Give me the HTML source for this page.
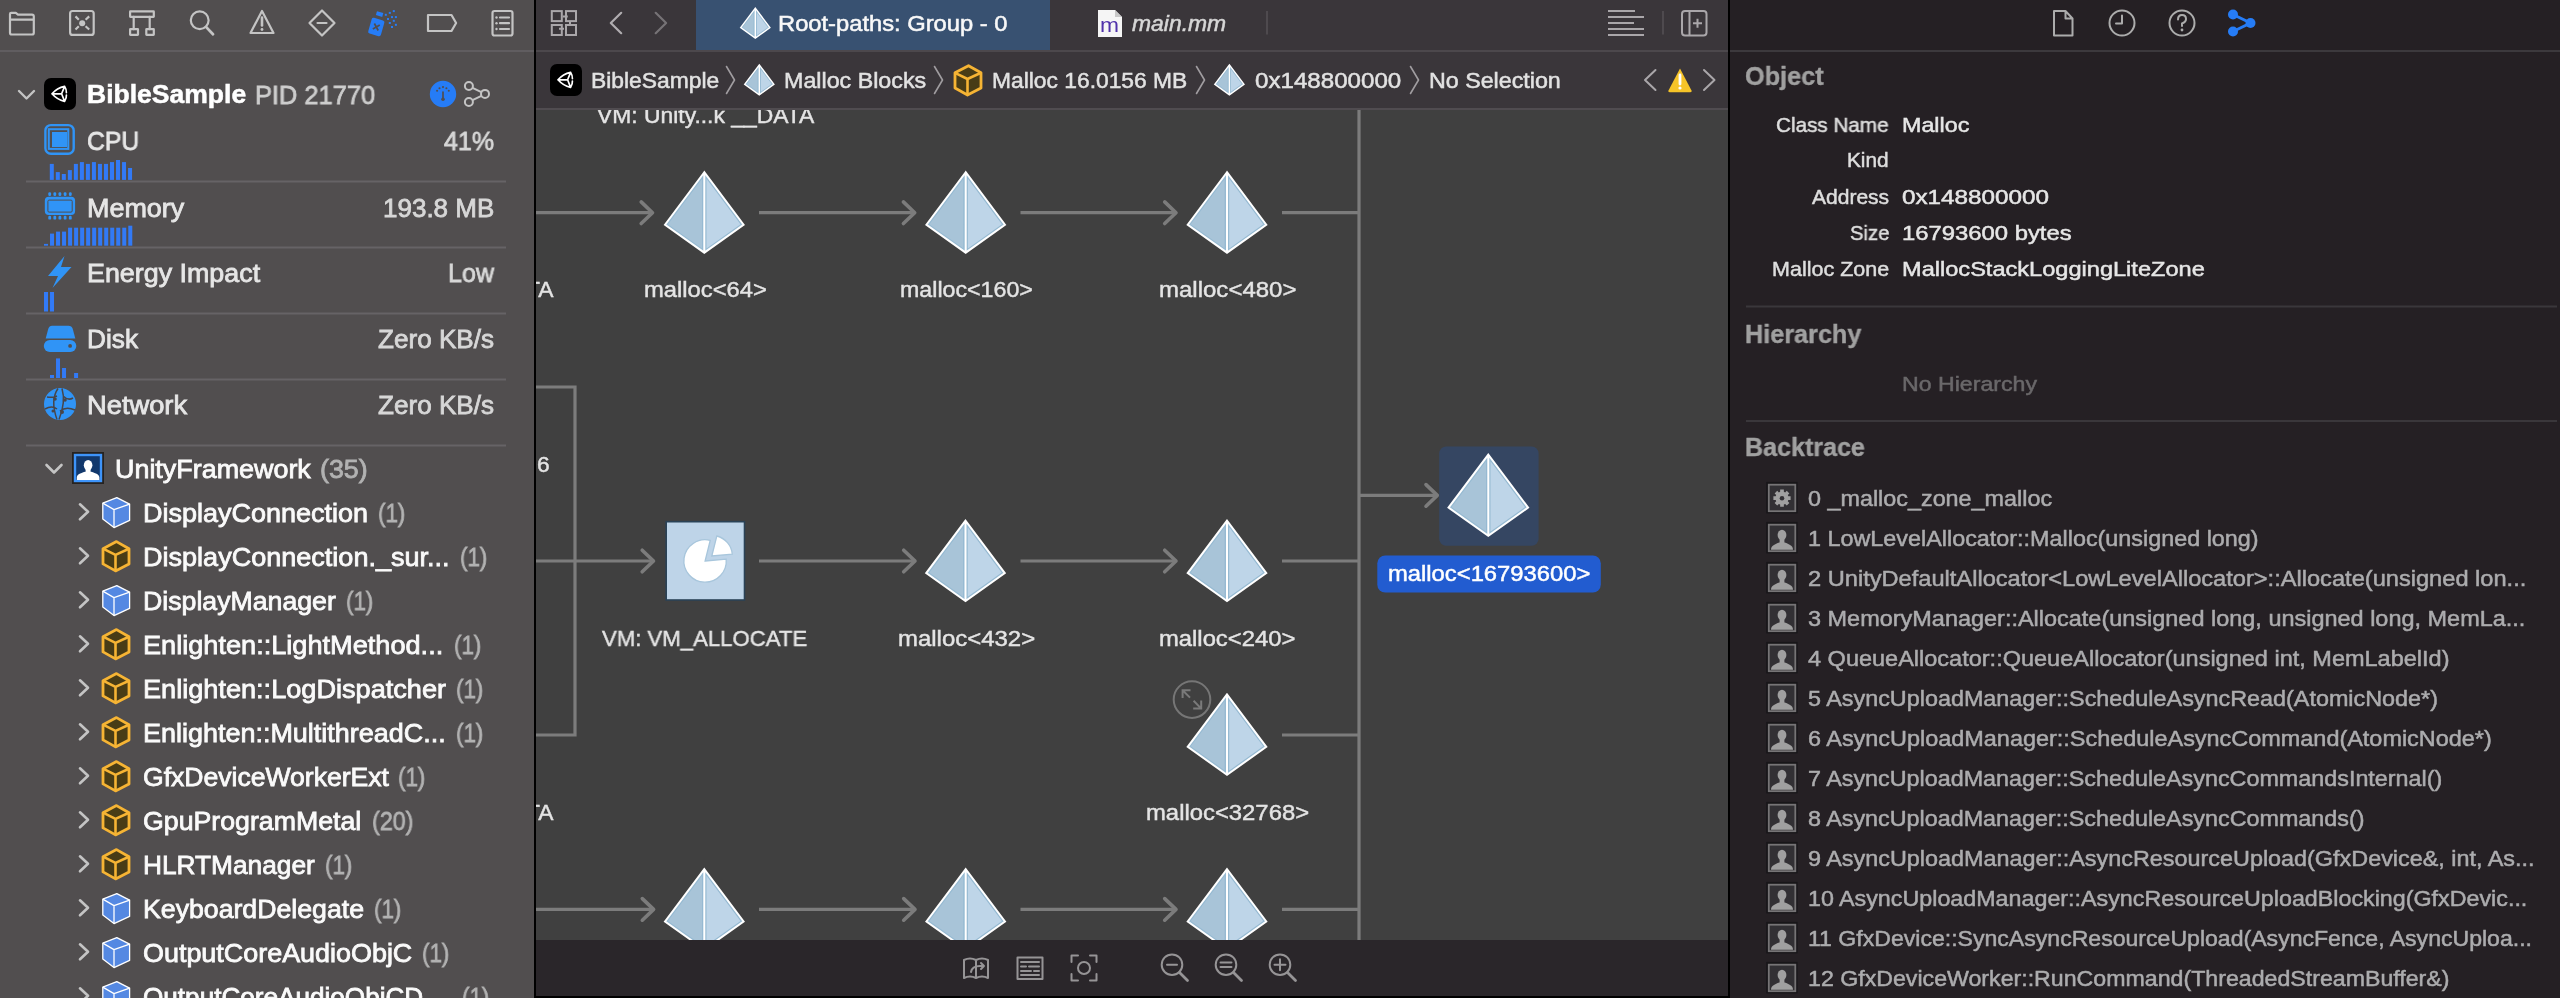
<!DOCTYPE html><html><head><meta charset="utf-8"><style>html,body{margin:0;padding:0;width:2560px;height:998px;overflow:hidden;background:#252226}.t{position:absolute;white-space:pre;font-family:"Liberation Sans",sans-serif;line-height:normal;transform-origin:0 0;will-change:transform}#gclip{position:absolute;left:536px;top:110px;width:1192px;height:830px;overflow:hidden}</style></head><body>
<svg style="position:absolute;left:0;top:0" width="2560" height="998" viewBox="0 0 2560 998"><rect x="0" y="0" width="534" height="998" fill="rgb(81,78,79)"/><rect x="534" y="0" width="2" height="998" fill="#000"/><rect x="536" y="0" width="1192" height="108" fill="rgb(58,54,58)"/><rect x="696" y="0" width="354" height="50" fill="rgb(56,81,113)"/><rect x="536" y="50" width="1192" height="2" fill="rgb(76,72,76)"/><rect x="536" y="108" width="1192" height="2" fill="rgb(80,76,80)"/><rect x="536" y="110" width="1192" height="830" fill="rgb(64,64,64)"/><rect x="536" y="940" width="1192" height="56" fill="rgb(42,38,42)"/><rect x="536" y="996" width="1192" height="2" fill="#000"/><rect x="1728" y="0" width="2" height="998" fill="#000"/><rect x="1730" y="0" width="830" height="998" fill="rgb(37,32,36)"/><rect x="1730" y="50" width="830" height="2" fill="rgb(60,57,61)"/><rect x="0" y="50" width="534" height="2" fill="rgb(96,93,96)"/><g fill="none" stroke="rgb(196,196,196)" stroke-width="2.2" stroke-linejoin="round" stroke-linecap="round"><path d="M10 14 q0-1.2 1.2-1.2 h4.6 l2.2 1.8 h14 q1.8 0 1.8 1.8 v16.3 q0 1.8-1.8 1.8 h-20.2 q-1.8 0-1.8-1.8 z M10 19.7 h23.8"/><rect x="70.1" y="11" width="23.6" height="23.9" rx="2.5"/><path d="M75.5 16.4 l3.3 3.3 M89.2 16.4 l-3.6 3.3 M75.5 29.5 l3.3-3.2 M89.2 29.5 l-3.6-3.2" stroke-linecap="butt"/></g><circle cx="82.2" cy="23.2" r="3" fill="rgb(196,196,196)"/><g fill="none" stroke="rgb(196,196,196)" stroke-width="2.2" stroke-linejoin="round" stroke-linecap="round"><rect x="130.1" y="11.4" width="23.7" height="5.4" rx="0.3"/><path d="M133.7 16.8 v12.4 M149.7 16.8 v12.4"/><rect x="130.1" y="29.2" width="7.9" height="5.7" rx="0.3"/><rect x="146.3" y="29.2" width="7.5" height="5.7" rx="0.3"/><circle cx="199.7" cy="20.2" r="8.9"/><path d="M206 26.9 l7 7.3" stroke-width="2.8"/><path d="M262 11 l11.5 22 h-23 z"/><path d="M322 10.5 l12.5 12.5 l-12.5 12.5 l-12.5-12.5 z M317.5 23 h9"/><path d="M428 15 h23.5 l4.6 8 l-4.6 8 h-23.5 z"/><rect x="492.5" y="11" width="20" height="24.5" rx="2"/><path d="M500 17.5 h9 M500 23.2 h9 M500 29 h9"/></g><circle cx="496.5" cy="17.5" r="1.2" fill="rgb(196,196,196)"/><circle cx="496.5" cy="23.2" r="1.2" fill="rgb(196,196,196)"/><circle cx="496.5" cy="29" r="1.2" fill="rgb(196,196,196)"/><path d="M262 17.5 v8" stroke="rgb(196,196,196)" stroke-width="2.6" stroke-linecap="round"/><circle cx="262" cy="29.5" r="1.4" fill="rgb(196,196,196)"/><g transform="translate(376.3,27) rotate(16)"><rect x="-6.6" y="-8.2" width="13.2" height="16.4" rx="2" fill="rgb(38,124,246)"/><path d="M-2.8 -2.8 l5.6 5.6 M2.8 -2.8 l-5.6 5.6" stroke="rgb(81,78,79)" stroke-width="1.7"/></g><g transform="translate(379.6,14.1) rotate(16)"><rect x="-3.3" y="-2" width="6.6" height="4" fill="rgb(38,124,246)"/></g><rect x="392.8" y="10.1" width="2" height="2" fill="rgb(38,124,246)"/><rect x="388.8" y="11.9" width="2" height="2" fill="rgb(38,124,246)"/><rect x="384.8" y="13.8" width="2" height="2" fill="rgb(38,124,246)"/><rect x="391" y="16.1" width="2" height="2" fill="rgb(38,124,246)"/><rect x="394.9" y="16.1" width="2" height="2" fill="rgb(38,124,246)"/><rect x="387" y="18" width="2" height="2" fill="rgb(38,124,246)"/><rect x="392.8" y="19.8" width="2" height="2" fill="rgb(38,124,246)"/><rect x="388.8" y="22" width="2" height="2" fill="rgb(38,124,246)"/><rect x="394.9" y="23.8" width="2" height="2" fill="rgb(38,124,246)"/><rect x="391" y="26" width="2" height="2" fill="rgb(38,124,246)"/><path d="M19 91 l7.5 7.5 l7.5-7.5" fill="none" stroke="rgb(196,196,196)" stroke-width="2.4" stroke-linecap="round" stroke-linejoin="round"/><g transform="translate(44,78) scale(1.0)"><rect x="0" y="0" width="32" height="32" rx="7" fill="#000"/><path d="M8 15.8 Q13 10 20.6 8.4 Q22.6 11.5 22.4 14.6 M22.4 17 Q22.6 20.2 20.6 23.4 Q13 21.6 8 15.8 M8 15.8 H17.6 L20.6 8.4 M17.6 15.8 L20.6 23.4" fill="none" stroke="#fff" stroke-width="1.7" stroke-linejoin="round" stroke-linecap="round"/></g><circle cx="443" cy="94" r="13.2" fill="rgb(38,124,246)"/><path d="M443 92 v7" stroke="rgb(81,78,79)" stroke-width="1.7" stroke-linecap="round"/><circle cx="443" cy="99.3" r="1.8" fill="rgb(81,78,79)"/><circle cx="437.1" cy="90.8" r="1.05" fill="rgb(81,78,79)"/><circle cx="439.5" cy="88.3" r="1.05" fill="rgb(81,78,79)"/><circle cx="443" cy="87.1" r="1.05" fill="rgb(81,78,79)"/><circle cx="446.4" cy="88.3" r="1.05" fill="rgb(81,78,79)"/><circle cx="448.8" cy="90.8" r="1.05" fill="rgb(81,78,79)"/><g fill="none" stroke="rgb(196,196,196)" stroke-width="2"><circle cx="468.9" cy="86" r="4"/><circle cx="485" cy="93.9" r="4"/><circle cx="468.9" cy="102" r="4"/><path d="M472.5 87.8 l8.9 4.4 M472.5 100.2 l8.9 -4.4"/></g><rect x="26" y="180.5" width="480" height="2" fill="rgb(102,99,102)"/><rect x="26" y="246.5" width="480" height="2" fill="rgb(102,99,102)"/><rect x="26" y="312.5" width="480" height="2" fill="rgb(102,99,102)"/><rect x="26" y="378.5" width="480" height="2" fill="rgb(102,99,102)"/><rect x="26" y="444.5" width="480" height="2" fill="rgb(102,99,102)"/><rect x="45.4" y="125.1" width="28.3" height="28.6" rx="5.5" fill="none" stroke="rgb(48,148,246)" stroke-width="2.4"/><rect x="48.8" y="129.2" width="19.5" height="19.7" fill="none" stroke="rgb(48,148,246)" stroke-width="2"/><rect x="52" y="132" width="15" height="15" fill="rgb(48,148,246)"/><rect x="45.8" y="197.8" width="28.3" height="16.2" rx="3" fill="rgb(48,148,246)" stroke="rgb(48,148,246)" stroke-width="2"/><rect x="47.9" y="200.1" width="24.3" height="12" rx="1.2" fill="rgb(48,148,246)" stroke="rgb(81,78,79)" stroke-width="1"/><rect x="48.3" y="192.2" width="2.8" height="3.8" rx="1.2" fill="rgb(48,148,246)"/><rect x="48.3" y="215.8" width="2.8" height="3.8" rx="1.2" fill="rgb(48,148,246)"/><rect x="53.4" y="192.2" width="2.8" height="3.8" rx="1.2" fill="rgb(48,148,246)"/><rect x="53.4" y="215.8" width="2.8" height="3.8" rx="1.2" fill="rgb(48,148,246)"/><rect x="58.5" y="192.2" width="2.8" height="3.8" rx="1.2" fill="rgb(48,148,246)"/><rect x="58.5" y="215.8" width="2.8" height="3.8" rx="1.2" fill="rgb(48,148,246)"/><rect x="63.7" y="192.2" width="2.8" height="3.8" rx="1.2" fill="rgb(48,148,246)"/><rect x="63.7" y="215.8" width="2.8" height="3.8" rx="1.2" fill="rgb(48,148,246)"/><rect x="68.9" y="192.2" width="2.8" height="3.8" rx="1.2" fill="rgb(48,148,246)"/><rect x="68.9" y="215.8" width="2.8" height="3.8" rx="1.2" fill="rgb(48,148,246)"/><path d="M64.5 256 L48 276 H58 L52.5 288 L71.5 267 H61 Z" fill="rgb(48,148,246)"/><path d="M52 325.8 h16.5 q3.2 0 4.2 3 l2.6 9.6 h-29.6 l2.6-9.6 q1-3 3.7-3 z" fill="rgb(48,148,246)"/><rect x="43.8" y="340" width="32.5" height="12" rx="6" fill="rgb(48,148,246)"/><circle cx="70.1" cy="345.9" r="1.9" fill="rgb(81,78,79)"/><circle cx="60" cy="404" r="16" fill="rgb(48,148,246)"/><g fill="none" stroke="rgb(72,70,74)" stroke-width="1.5"><path d="M58 388.5 Q50 400 57 419.5 M62 388.5 Q66 402 59 419.5 M47 397 Q53 398 57 396 M63 396 Q68 401 73 398 M45 409 Q52 405 57 409 M60 411 Q66 406 75 410"/></g><g fill="rgb(72,70,74)"><circle cx="55" cy="399" r="1.8"/><circle cx="65" cy="400" r="1.8"/><circle cx="62" cy="412" r="2"/><circle cx="53" cy="411" r="1.5"/></g><rect x="49.80" y="163.90" width="4" height="16.00" fill="rgb(50,122,246)"/><rect x="55.82" y="172.10" width="4" height="7.80" fill="rgb(50,122,246)"/><rect x="61.84" y="174.00" width="4" height="5.90" fill="rgb(50,122,246)"/><rect x="67.86" y="170.10" width="4" height="9.80" fill="rgb(50,122,246)"/><rect x="73.88" y="163.90" width="4" height="16.00" fill="rgb(50,122,246)"/><rect x="79.90" y="162.10" width="4" height="17.80" fill="rgb(50,122,246)"/><rect x="85.92" y="163.90" width="4" height="16.00" fill="rgb(50,122,246)"/><rect x="91.94" y="162.10" width="4" height="17.80" fill="rgb(50,122,246)"/><rect x="97.96" y="163.90" width="4" height="16.00" fill="rgb(50,122,246)"/><rect x="103.98" y="163.90" width="4" height="16.00" fill="rgb(50,122,246)"/><rect x="110.00" y="162.10" width="4" height="17.80" fill="rgb(50,122,246)"/><rect x="116.02" y="160.00" width="4" height="19.90" fill="rgb(50,122,246)"/><rect x="122.04" y="162.10" width="4" height="17.80" fill="rgb(50,122,246)"/><rect x="128.06" y="168.00" width="4" height="11.90" fill="rgb(50,122,246)"/><rect x="44.00" y="243.90" width="4" height="1.80" fill="rgb(50,122,246)"/><rect x="50.02" y="233.60" width="4" height="12.10" fill="rgb(50,122,246)"/><rect x="56.04" y="231.60" width="4" height="14.10" fill="rgb(50,122,246)"/><rect x="62.06" y="231.60" width="4" height="14.10" fill="rgb(50,122,246)"/><rect x="68.08" y="227.70" width="4" height="18.00" fill="rgb(50,122,246)"/><rect x="74.10" y="227.70" width="4" height="18.00" fill="rgb(50,122,246)"/><rect x="80.12" y="227.70" width="4" height="18.00" fill="rgb(50,122,246)"/><rect x="86.14" y="227.70" width="4" height="18.00" fill="rgb(50,122,246)"/><rect x="92.16" y="227.70" width="4" height="18.00" fill="rgb(50,122,246)"/><rect x="98.18" y="227.70" width="4" height="18.00" fill="rgb(50,122,246)"/><rect x="104.20" y="227.70" width="4" height="18.00" fill="rgb(50,122,246)"/><rect x="110.22" y="227.70" width="4" height="18.00" fill="rgb(50,122,246)"/><rect x="116.24" y="227.70" width="4" height="18.00" fill="rgb(50,122,246)"/><rect x="122.26" y="227.70" width="4" height="18.00" fill="rgb(50,122,246)"/><rect x="128.28" y="225.70" width="4" height="20.00" fill="rgb(50,122,246)"/><rect x="44.00" y="292.00" width="4" height="19.50" fill="rgb(50,122,246)"/><rect x="50.02" y="292.00" width="4" height="19.50" fill="rgb(50,122,246)"/><rect x="50.00" y="375.00" width="4" height="3.00" fill="rgb(50,122,246)"/><rect x="56.02" y="358.40" width="4" height="19.60" fill="rgb(50,122,246)"/><rect x="62.04" y="368.00" width="4" height="10.00" fill="rgb(50,122,246)"/><rect x="74.08" y="373.00" width="4" height="5.00" fill="rgb(50,122,246)"/><path d="M46.5 465 l7.5 7.5 l7.5-7.5" fill="none" stroke="rgb(196,196,196)" stroke-width="2.6" stroke-linecap="round" stroke-linejoin="round"/><rect x="72" y="452" width="32" height="32" fill="rgb(38,34,32)"/><rect x="75" y="455" width="26" height="26" fill="rgb(18,56,108)" stroke="rgb(62,148,250)" stroke-width="2.4"/><g fill="#fff"><ellipse cx="88.1" cy="465.3" rx="4.3" ry="5.3"/><rect x="85.6" y="468" width="5" height="4.5"/><path d="M76.8 480.1 V477.5 C77 474.5 80 473.5 85 471.8 H91.2 C96.2 473.5 99.2 474.5 99.4 477.5 V480.1 Z"/></g><path d="M80 504.29999999999995 l8 7.5 l-8 7.5" fill="none" stroke="rgb(196,196,196)" stroke-width="2.6" stroke-linecap="round" stroke-linejoin="round"/><g transform="translate(102.3,497.09999999999997)"><path d="M0.5 6 L14.5 0.5 L27.3 7 L27.3 23.3 L11.7 30.5 L0.5 22 Z" fill="rgb(84,136,226)" stroke="#fff" stroke-width="1.3" stroke-linejoin="round"/><path d="M0.5 6 L11.7 12.5 L27.3 7 M11.7 12.5 V30.5" fill="none" stroke="#fff" stroke-width="1.3" stroke-linejoin="round"/></g><path d="M80 548.3 l8 7.5 l-8 7.5" fill="none" stroke="rgb(196,196,196)" stroke-width="2.6" stroke-linecap="round" stroke-linejoin="round"/><g transform="translate(102,540.4)"><path d="M14.5 1.2 L27 8.3 L27 23.5 L13.5 30.5 L1 23.5 L1 8.3 Z" fill="rgb(72,60,22)" stroke="rgb(246,180,52)" stroke-width="2.8" stroke-linejoin="round"/><path d="M1 8.3 L13.5 14.5 L27 8.3 M13.5 14.5 V30.5" fill="none" stroke="rgb(246,180,52)" stroke-width="2.6" stroke-linejoin="round"/></g><path d="M80 592.3 l8 7.5 l-8 7.5" fill="none" stroke="rgb(196,196,196)" stroke-width="2.6" stroke-linecap="round" stroke-linejoin="round"/><g transform="translate(102.3,585.0999999999999)"><path d="M0.5 6 L14.5 0.5 L27.3 7 L27.3 23.3 L11.7 30.5 L0.5 22 Z" fill="rgb(84,136,226)" stroke="#fff" stroke-width="1.3" stroke-linejoin="round"/><path d="M0.5 6 L11.7 12.5 L27.3 7 M11.7 12.5 V30.5" fill="none" stroke="#fff" stroke-width="1.3" stroke-linejoin="round"/></g><path d="M80 636.3 l8 7.5 l-8 7.5" fill="none" stroke="rgb(196,196,196)" stroke-width="2.6" stroke-linecap="round" stroke-linejoin="round"/><g transform="translate(102,628.4)"><path d="M14.5 1.2 L27 8.3 L27 23.5 L13.5 30.5 L1 23.5 L1 8.3 Z" fill="rgb(72,60,22)" stroke="rgb(246,180,52)" stroke-width="2.8" stroke-linejoin="round"/><path d="M1 8.3 L13.5 14.5 L27 8.3 M13.5 14.5 V30.5" fill="none" stroke="rgb(246,180,52)" stroke-width="2.6" stroke-linejoin="round"/></g><path d="M80 680.3 l8 7.5 l-8 7.5" fill="none" stroke="rgb(196,196,196)" stroke-width="2.6" stroke-linecap="round" stroke-linejoin="round"/><g transform="translate(102,672.4)"><path d="M14.5 1.2 L27 8.3 L27 23.5 L13.5 30.5 L1 23.5 L1 8.3 Z" fill="rgb(72,60,22)" stroke="rgb(246,180,52)" stroke-width="2.8" stroke-linejoin="round"/><path d="M1 8.3 L13.5 14.5 L27 8.3 M13.5 14.5 V30.5" fill="none" stroke="rgb(246,180,52)" stroke-width="2.6" stroke-linejoin="round"/></g><path d="M80 724.3 l8 7.5 l-8 7.5" fill="none" stroke="rgb(196,196,196)" stroke-width="2.6" stroke-linecap="round" stroke-linejoin="round"/><g transform="translate(102,716.4)"><path d="M14.5 1.2 L27 8.3 L27 23.5 L13.5 30.5 L1 23.5 L1 8.3 Z" fill="rgb(72,60,22)" stroke="rgb(246,180,52)" stroke-width="2.8" stroke-linejoin="round"/><path d="M1 8.3 L13.5 14.5 L27 8.3 M13.5 14.5 V30.5" fill="none" stroke="rgb(246,180,52)" stroke-width="2.6" stroke-linejoin="round"/></g><path d="M80 768.3 l8 7.5 l-8 7.5" fill="none" stroke="rgb(196,196,196)" stroke-width="2.6" stroke-linecap="round" stroke-linejoin="round"/><g transform="translate(102,760.4)"><path d="M14.5 1.2 L27 8.3 L27 23.5 L13.5 30.5 L1 23.5 L1 8.3 Z" fill="rgb(72,60,22)" stroke="rgb(246,180,52)" stroke-width="2.8" stroke-linejoin="round"/><path d="M1 8.3 L13.5 14.5 L27 8.3 M13.5 14.5 V30.5" fill="none" stroke="rgb(246,180,52)" stroke-width="2.6" stroke-linejoin="round"/></g><path d="M80 812.3 l8 7.5 l-8 7.5" fill="none" stroke="rgb(196,196,196)" stroke-width="2.6" stroke-linecap="round" stroke-linejoin="round"/><g transform="translate(102,804.4)"><path d="M14.5 1.2 L27 8.3 L27 23.5 L13.5 30.5 L1 23.5 L1 8.3 Z" fill="rgb(72,60,22)" stroke="rgb(246,180,52)" stroke-width="2.8" stroke-linejoin="round"/><path d="M1 8.3 L13.5 14.5 L27 8.3 M13.5 14.5 V30.5" fill="none" stroke="rgb(246,180,52)" stroke-width="2.6" stroke-linejoin="round"/></g><path d="M80 856.3 l8 7.5 l-8 7.5" fill="none" stroke="rgb(196,196,196)" stroke-width="2.6" stroke-linecap="round" stroke-linejoin="round"/><g transform="translate(102,848.4)"><path d="M14.5 1.2 L27 8.3 L27 23.5 L13.5 30.5 L1 23.5 L1 8.3 Z" fill="rgb(72,60,22)" stroke="rgb(246,180,52)" stroke-width="2.8" stroke-linejoin="round"/><path d="M1 8.3 L13.5 14.5 L27 8.3 M13.5 14.5 V30.5" fill="none" stroke="rgb(246,180,52)" stroke-width="2.6" stroke-linejoin="round"/></g><path d="M80 900.3 l8 7.5 l-8 7.5" fill="none" stroke="rgb(196,196,196)" stroke-width="2.6" stroke-linecap="round" stroke-linejoin="round"/><g transform="translate(102.3,893.0999999999999)"><path d="M0.5 6 L14.5 0.5 L27.3 7 L27.3 23.3 L11.7 30.5 L0.5 22 Z" fill="rgb(84,136,226)" stroke="#fff" stroke-width="1.3" stroke-linejoin="round"/><path d="M0.5 6 L11.7 12.5 L27.3 7 M11.7 12.5 V30.5" fill="none" stroke="#fff" stroke-width="1.3" stroke-linejoin="round"/></g><path d="M80 944.3 l8 7.5 l-8 7.5" fill="none" stroke="rgb(196,196,196)" stroke-width="2.6" stroke-linecap="round" stroke-linejoin="round"/><g transform="translate(102.3,937.0999999999999)"><path d="M0.5 6 L14.5 0.5 L27.3 7 L27.3 23.3 L11.7 30.5 L0.5 22 Z" fill="rgb(84,136,226)" stroke="#fff" stroke-width="1.3" stroke-linejoin="round"/><path d="M0.5 6 L11.7 12.5 L27.3 7 M11.7 12.5 V30.5" fill="none" stroke="#fff" stroke-width="1.3" stroke-linejoin="round"/></g><path d="M80 988.3 l8 7.5 l-8 7.5" fill="none" stroke="rgb(196,196,196)" stroke-width="2.6" stroke-linecap="round" stroke-linejoin="round"/><g transform="translate(102.3,981.0999999999999)"><path d="M0.5 6 L14.5 0.5 L27.3 7 L27.3 23.3 L11.7 30.5 L0.5 22 Z" fill="rgb(84,136,226)" stroke="#fff" stroke-width="1.3" stroke-linejoin="round"/><path d="M0.5 6 L11.7 12.5 L27.3 7 M11.7 12.5 V30.5" fill="none" stroke="#fff" stroke-width="1.3" stroke-linejoin="round"/></g><g fill="none" stroke="rgb(170,167,170)" stroke-width="2"><rect x="551.8" y="11.1" width="10" height="10"/><rect x="566" y="11.1" width="10" height="10"/><rect x="551.8" y="25" width="10" height="10"/><rect x="566" y="25" width="10" height="10"/><path d="M562.8 16.5 h5 M570 21 v5 M559 28.8 h5"/></g><path d="M621.2 12.8 L610.8 23 L621.2 33.2" fill="none" stroke="rgb(176,173,176)" stroke-width="2.2" stroke-linecap="round" stroke-linejoin="round"/><path d="M655.7 12.8 L666.1 23 L655.7 33.2" fill="none" stroke="rgb(118,115,118)" stroke-width="2.2" stroke-linecap="round" stroke-linejoin="round"/><clipPath id="pc1"><path d="M755.30 8.17 L740.70 27.64 L755.30 38.14 L769.90 27.64 Z"/></clipPath><g clip-path="url(#pc1)"><path d="M755.30 8.17 L740.70 27.64 L755.30 38.14 Z" fill="rgb(168, 196, 216)" stroke="rgb(150, 186, 210)" stroke-width="3.08"/><path d="M755.30 8.17 L769.90 27.64 L755.30 38.14 Z" fill="rgb(190, 213, 232)" stroke="rgb(150, 186, 210)" stroke-width="3.08"/></g><path d="M755.30 8.17 L740.70 27.64 L755.30 38.14 L769.90 27.64 Z M755.30 8.17 V38.14" fill="none" stroke="#fff" stroke-width="1.4" stroke-linejoin="miter" stroke-miterlimit="10"/><path d="M1098 10 h17 l7 7 v20 h-24 z" fill="rgb(245,245,245)"/><path d="M1115 10 v7 h7" fill="rgb(200,200,200)"/><rect x="1266" y="11" width="2" height="23.5" fill="rgb(78,74,78)"/><rect x="1662" y="11" width="2" height="23.5" fill="rgb(78,74,78)"/><g stroke="rgb(170,167,170)" stroke-width="2"><path d="M1608 11 h27 M1608 17 h36 M1608 23 h26 M1608 29 h36 M1608 35 h36"/></g><rect x="1682" y="11" width="24.5" height="24.5" rx="3" fill="none" stroke="rgb(170,167,170)" stroke-width="2"/><path d="M1689.5 11 v24.5 M1693 23.2 h9 M1697.5 18.7 v9" stroke="rgb(170,167,170)" stroke-width="2"/><g transform="translate(550,64) scale(1.0)"><rect x="0" y="0" width="32" height="32" rx="7" fill="#000"/><path d="M8 15.8 Q13 10 20.6 8.4 Q22.6 11.5 22.4 14.6 M22.4 17 Q22.6 20.2 20.6 23.4 Q13 21.6 8 15.8 M8 15.8 H17.6 L20.6 8.4 M17.6 15.8 L20.6 23.4" fill="none" stroke="#fff" stroke-width="1.7" stroke-linejoin="round" stroke-linecap="round"/></g><path d="M726.5 66.5 l8 13.5 l-8 13.5" fill="none" stroke="rgb(160,157,160)" stroke-width="1.6" stroke-linecap="round" stroke-linejoin="round"/><clipPath id="pc2"><path d="M759.30 64.87 L744.70 84.34 L759.30 94.84 L773.90 84.34 Z"/></clipPath><g clip-path="url(#pc2)"><path d="M759.30 64.87 L744.70 84.34 L759.30 94.84 Z" fill="rgb(168, 196, 216)" stroke="rgb(150, 186, 210)" stroke-width="3.08"/><path d="M759.30 64.87 L773.90 84.34 L759.30 94.84 Z" fill="rgb(190, 213, 232)" stroke="rgb(150, 186, 210)" stroke-width="3.08"/></g><path d="M759.30 64.87 L744.70 84.34 L759.30 94.84 L773.90 84.34 Z M759.30 64.87 V94.84" fill="none" stroke="#fff" stroke-width="1.4" stroke-linejoin="miter" stroke-miterlimit="10"/><path d="M934.5 66.5 l8 13.5 l-8 13.5" fill="none" stroke="rgb(160,157,160)" stroke-width="1.6" stroke-linecap="round" stroke-linejoin="round"/><g transform="translate(954,64.5)"><path d="M14.5 1.2 L27 8.3 L27 23.5 L13.5 30.5 L1 23.5 L1 8.3 Z" fill="rgb(72,60,22)" stroke="rgb(246,180,52)" stroke-width="2.8" stroke-linejoin="round"/><path d="M1 8.3 L13.5 14.5 L27 8.3 M13.5 14.5 V30.5" fill="none" stroke="rgb(246,180,52)" stroke-width="2.6" stroke-linejoin="round"/></g><path d="M1196.5 66.5 l8 13.5 l-8 13.5" fill="none" stroke="rgb(160,157,160)" stroke-width="1.6" stroke-linecap="round" stroke-linejoin="round"/><clipPath id="pc3"><path d="M1229.40 64.87 L1214.80 84.34 L1229.40 94.84 L1244.00 84.34 Z"/></clipPath><g clip-path="url(#pc3)"><path d="M1229.40 64.87 L1214.80 84.34 L1229.40 94.84 Z" fill="rgb(168, 196, 216)" stroke="rgb(150, 186, 210)" stroke-width="3.08"/><path d="M1229.40 64.87 L1244.00 84.34 L1229.40 94.84 Z" fill="rgb(190, 213, 232)" stroke="rgb(150, 186, 210)" stroke-width="3.08"/></g><path d="M1229.40 64.87 L1214.80 84.34 L1229.40 94.84 L1244.00 84.34 Z M1229.40 64.87 V94.84" fill="none" stroke="#fff" stroke-width="1.4" stroke-linejoin="miter" stroke-miterlimit="10"/><path d="M1410.5 66.5 l8 13.5 l-8 13.5" fill="none" stroke="rgb(160,157,160)" stroke-width="1.6" stroke-linecap="round" stroke-linejoin="round"/><path d="M1655.5 70 l-10.5 10 l10.5 10" fill="none" stroke="rgb(170,167,170)" stroke-width="2" stroke-linecap="round" stroke-linejoin="round"/><path d="M1704 70 l10.5 10 l-10.5 10" fill="none" stroke="rgb(170,167,170)" stroke-width="2" stroke-linecap="round" stroke-linejoin="round"/><path d="M1680 68.5 l11.5 22 q0.8 1.8-1.2 1.8 h-20.6 q-2 0-1.2-1.8 z" fill="rgb(246,196,40)"/><path d="M1680 75 v9" stroke="#fff" stroke-width="2.8" stroke-linecap="round"/><circle cx="1680" cy="88" r="1.6" fill="#fff"/><svg x="536" y="110" width="1192" height="830" viewBox="536 110 1192 830" overflow="hidden"><path d="M536 212.7 H652" stroke="rgb(124,124,124)" stroke-width="3.2"/><path d="M641.2 201.89999999999998 L652.5 212.7 L641.2 223.5" fill="none" stroke="rgb(124,124,124)" stroke-width="3.6" stroke-linecap="round" stroke-linejoin="round"/><path d="M759 212.7 H914" stroke="rgb(124,124,124)" stroke-width="3.2"/><path d="M903.4000000000001 201.89999999999998 L914.7 212.7 L903.4000000000001 223.5" fill="none" stroke="rgb(124,124,124)" stroke-width="3.6" stroke-linecap="round" stroke-linejoin="round"/><path d="M1020.5 212.7 H1175" stroke="rgb(124,124,124)" stroke-width="3.2"/><path d="M1164.7 201.89999999999998 L1176 212.7 L1164.7 223.5" fill="none" stroke="rgb(124,124,124)" stroke-width="3.6" stroke-linecap="round" stroke-linejoin="round"/><path d="M1282 212.7 H1359" stroke="rgb(124,124,124)" stroke-width="3.2"/><clipPath id="pc4"><path d="M704.30 172.27 L665.03 224.70 L704.30 252.67 L743.57 224.70 Z"/></clipPath><g clip-path="url(#pc4)"><path d="M704.30 172.27 L665.03 224.70 L704.30 252.67 Z" fill="rgb(168, 196, 216)" stroke="rgb(150, 186, 210)" stroke-width="4.40"/><path d="M704.30 172.27 L743.57 224.70 L704.30 252.67 Z" fill="rgb(190, 213, 232)" stroke="rgb(150, 186, 210)" stroke-width="4.40"/></g><path d="M704.30 172.27 L665.03 224.70 L704.30 252.67 L743.57 224.70 Z M704.30 172.27 V252.67" fill="none" stroke="#fff" stroke-width="2.0" stroke-linejoin="miter" stroke-miterlimit="10"/><clipPath id="pc5"><path d="M965.70 172.27 L926.43 224.70 L965.70 252.67 L1004.97 224.70 Z"/></clipPath><g clip-path="url(#pc5)"><path d="M965.70 172.27 L926.43 224.70 L965.70 252.67 Z" fill="rgb(168, 196, 216)" stroke="rgb(150, 186, 210)" stroke-width="4.40"/><path d="M965.70 172.27 L1004.97 224.70 L965.70 252.67 Z" fill="rgb(190, 213, 232)" stroke="rgb(150, 186, 210)" stroke-width="4.40"/></g><path d="M965.70 172.27 L926.43 224.70 L965.70 252.67 L1004.97 224.70 Z M965.70 172.27 V252.67" fill="none" stroke="#fff" stroke-width="2.0" stroke-linejoin="miter" stroke-miterlimit="10"/><clipPath id="pc6"><path d="M1227.00 172.27 L1187.73 224.70 L1227.00 252.67 L1266.27 224.70 Z"/></clipPath><g clip-path="url(#pc6)"><path d="M1227.00 172.27 L1187.73 224.70 L1227.00 252.67 Z" fill="rgb(168, 196, 216)" stroke="rgb(150, 186, 210)" stroke-width="4.40"/><path d="M1227.00 172.27 L1266.27 224.70 L1227.00 252.67 Z" fill="rgb(190, 213, 232)" stroke="rgb(150, 186, 210)" stroke-width="4.40"/></g><path d="M1227.00 172.27 L1187.73 224.70 L1227.00 252.67 L1266.27 224.70 Z M1227.00 172.27 V252.67" fill="none" stroke="#fff" stroke-width="2.0" stroke-linejoin="miter" stroke-miterlimit="10"/><path d="M536 387 H575 V735 H536" fill="none" stroke="rgb(124,124,124)" stroke-width="3.2"/><path d="M536 561 H652" stroke="rgb(124,124,124)" stroke-width="3.2"/><path d="M642.2 550.2 L653.5 561 L642.2 571.8" fill="none" stroke="rgb(124,124,124)" stroke-width="3.6" stroke-linecap="round" stroke-linejoin="round"/><rect x="666.2" y="521.7" width="78.3" height="78.3" fill="rgb(190,212,232)" stroke="rgb(42,66,86)" stroke-width="1.6"/><g fill="#fff" stroke="rgb(168,198,220)" stroke-width="1.3"><path d="M705.1 561 L726.2 559.15 A21.2 21.2 0 1 1 710.2 540.4 Z"/><path d="M711.8 556 L716.8 536 A20.6 20.6 0 0 1 732.3 554.2 Z"/></g><path d="M759 561 H914" stroke="rgb(124,124,124)" stroke-width="3.2"/><path d="M903.7 550.2 L915 561 L903.7 571.8" fill="none" stroke="rgb(124,124,124)" stroke-width="3.6" stroke-linecap="round" stroke-linejoin="round"/><path d="M1020.5 561 H1175" stroke="rgb(124,124,124)" stroke-width="3.2"/><path d="M1164.7 550.2 L1176 561 L1164.7 571.8" fill="none" stroke="rgb(124,124,124)" stroke-width="3.6" stroke-linecap="round" stroke-linejoin="round"/><path d="M1282 561 H1359" stroke="rgb(124,124,124)" stroke-width="3.2"/><clipPath id="pc7"><path d="M965.50 520.67 L926.23 573.10 L965.50 601.07 L1004.77 573.10 Z"/></clipPath><g clip-path="url(#pc7)"><path d="M965.50 520.67 L926.23 573.10 L965.50 601.07 Z" fill="rgb(168, 196, 216)" stroke="rgb(150, 186, 210)" stroke-width="4.40"/><path d="M965.50 520.67 L1004.77 573.10 L965.50 601.07 Z" fill="rgb(190, 213, 232)" stroke="rgb(150, 186, 210)" stroke-width="4.40"/></g><path d="M965.50 520.67 L926.23 573.10 L965.50 601.07 L1004.77 573.10 Z M965.50 520.67 V601.07" fill="none" stroke="#fff" stroke-width="2.0" stroke-linejoin="miter" stroke-miterlimit="10"/><clipPath id="pc8"><path d="M1227.00 520.67 L1187.73 573.10 L1227.00 601.07 L1266.27 573.10 Z"/></clipPath><g clip-path="url(#pc8)"><path d="M1227.00 520.67 L1187.73 573.10 L1227.00 601.07 Z" fill="rgb(168, 196, 216)" stroke="rgb(150, 186, 210)" stroke-width="4.40"/><path d="M1227.00 520.67 L1266.27 573.10 L1227.00 601.07 Z" fill="rgb(190, 213, 232)" stroke="rgb(150, 186, 210)" stroke-width="4.40"/></g><path d="M1227.00 520.67 L1187.73 573.10 L1227.00 601.07 L1266.27 573.10 Z M1227.00 520.67 V601.07" fill="none" stroke="#fff" stroke-width="2.0" stroke-linejoin="miter" stroke-miterlimit="10"/><clipPath id="pc9"><path d="M1227.00 694.37 L1187.73 746.80 L1227.00 774.77 L1266.27 746.80 Z"/></clipPath><g clip-path="url(#pc9)"><path d="M1227.00 694.37 L1187.73 746.80 L1227.00 774.77 Z" fill="rgb(168, 196, 216)" stroke="rgb(150, 186, 210)" stroke-width="4.40"/><path d="M1227.00 694.37 L1266.27 746.80 L1227.00 774.77 Z" fill="rgb(190, 213, 232)" stroke="rgb(150, 186, 210)" stroke-width="4.40"/></g><path d="M1227.00 694.37 L1187.73 746.80 L1227.00 774.77 L1266.27 746.80 Z M1227.00 694.37 V774.77" fill="none" stroke="#fff" stroke-width="2.0" stroke-linejoin="miter" stroke-miterlimit="10"/><path d="M1282 735 H1359" stroke="rgb(124,124,124)" stroke-width="3.2"/><circle cx="1192" cy="699.6" r="18.3" fill="none" stroke="rgb(118,118,118)" stroke-width="2"/><path d="M1190 697.6 L1182.6 690.2 M1182.6 698 V690.2 H1190.5 M1193.6 700.8 L1201.2 708.6 M1193.2 708.6 H1201.2 V700.4" fill="none" stroke="rgb(122,122,122)" stroke-width="2"/><path d="M536 909.4 H652" stroke="rgb(124,124,124)" stroke-width="3.2"/><path d="M642.3000000000001 898.6 L653.6 909.4 L642.3000000000001 920.1999999999999" fill="none" stroke="rgb(124,124,124)" stroke-width="3.6" stroke-linecap="round" stroke-linejoin="round"/><path d="M759 909.4 H914" stroke="rgb(124,124,124)" stroke-width="3.2"/><path d="M903.7 898.6 L915 909.4 L903.7 920.1999999999999" fill="none" stroke="rgb(124,124,124)" stroke-width="3.6" stroke-linecap="round" stroke-linejoin="round"/><path d="M1020.5 909.4 H1175" stroke="rgb(124,124,124)" stroke-width="3.2"/><path d="M1164.7 898.6 L1176 909.4 L1164.7 920.1999999999999" fill="none" stroke="rgb(124,124,124)" stroke-width="3.6" stroke-linecap="round" stroke-linejoin="round"/><path d="M1282 909.4 H1359" stroke="rgb(124,124,124)" stroke-width="3.2"/><clipPath id="pc10"><path d="M704.30 869.07 L665.03 921.50 L704.30 949.47 L743.57 921.50 Z"/></clipPath><g clip-path="url(#pc10)"><path d="M704.30 869.07 L665.03 921.50 L704.30 949.47 Z" fill="rgb(168, 196, 216)" stroke="rgb(150, 186, 210)" stroke-width="4.40"/><path d="M704.30 869.07 L743.57 921.50 L704.30 949.47 Z" fill="rgb(190, 213, 232)" stroke="rgb(150, 186, 210)" stroke-width="4.40"/></g><path d="M704.30 869.07 L665.03 921.50 L704.30 949.47 L743.57 921.50 Z M704.30 869.07 V949.47" fill="none" stroke="#fff" stroke-width="2.0" stroke-linejoin="miter" stroke-miterlimit="10"/><clipPath id="pc11"><path d="M965.70 869.07 L926.43 921.50 L965.70 949.47 L1004.97 921.50 Z"/></clipPath><g clip-path="url(#pc11)"><path d="M965.70 869.07 L926.43 921.50 L965.70 949.47 Z" fill="rgb(168, 196, 216)" stroke="rgb(150, 186, 210)" stroke-width="4.40"/><path d="M965.70 869.07 L1004.97 921.50 L965.70 949.47 Z" fill="rgb(190, 213, 232)" stroke="rgb(150, 186, 210)" stroke-width="4.40"/></g><path d="M965.70 869.07 L926.43 921.50 L965.70 949.47 L1004.97 921.50 Z M965.70 869.07 V949.47" fill="none" stroke="#fff" stroke-width="2.0" stroke-linejoin="miter" stroke-miterlimit="10"/><clipPath id="pc12"><path d="M1227.00 869.07 L1187.73 921.50 L1227.00 949.47 L1266.27 921.50 Z"/></clipPath><g clip-path="url(#pc12)"><path d="M1227.00 869.07 L1187.73 921.50 L1227.00 949.47 Z" fill="rgb(168, 196, 216)" stroke="rgb(150, 186, 210)" stroke-width="4.40"/><path d="M1227.00 869.07 L1266.27 921.50 L1227.00 949.47 Z" fill="rgb(190, 213, 232)" stroke="rgb(150, 186, 210)" stroke-width="4.40"/></g><path d="M1227.00 869.07 L1187.73 921.50 L1227.00 949.47 L1266.27 921.50 Z M1227.00 869.07 V949.47" fill="none" stroke="#fff" stroke-width="2.0" stroke-linejoin="miter" stroke-miterlimit="10"/><path d="M1359 110 V940" stroke="rgb(124,124,124)" stroke-width="3.2"/><path d="M1359 495.4 H1436" stroke="rgb(124,124,124)" stroke-width="3.2"/><path d="M1426.0 484.59999999999997 L1437.3 495.4 L1426.0 506.2" fill="none" stroke="rgb(124,124,124)" stroke-width="3.6" stroke-linecap="round" stroke-linejoin="round"/><rect x="1439.2" y="446.4" width="99.4" height="99.4" rx="7" fill="rgb(53,70,98)"/><clipPath id="pc13"><path d="M1488.30 454.66 L1448.53 507.60 L1488.30 535.87 L1528.07 507.60 Z"/></clipPath><g clip-path="url(#pc13)"><path d="M1488.30 454.66 L1448.53 507.60 L1488.30 535.87 Z" fill="rgb(168, 196, 216)" stroke="rgb(150, 186, 210)" stroke-width="4.40"/><path d="M1488.30 454.66 L1528.07 507.60 L1488.30 535.87 Z" fill="rgb(190, 213, 232)" stroke="rgb(150, 186, 210)" stroke-width="4.40"/></g><path d="M1488.30 454.66 L1448.53 507.60 L1488.30 535.87 L1528.07 507.60 Z M1488.30 454.66 V535.87" fill="none" stroke="#fff" stroke-width="2.0" stroke-linejoin="miter" stroke-miterlimit="10"/><rect x="1377.3" y="555.4" width="223.5" height="37.2" rx="8" fill="rgb(34,92,208)"/></svg><g fill="none" stroke="rgb(150,148,150)" stroke-width="2" stroke-linejoin="round" stroke-linecap="round"><path d="M964 960 q6-3 12 0 q6-3 12 0 v18 q-6-3-12 0 q-6-3-12 0 z M976 960 v18 M971 972 q1-6 9-6 h4 M981 963 l3 3 l-3 3"/><rect x="1017.5" y="957.5" width="25" height="21.5"/><path d="M1021 962 h18 M1021 966.5 h5 M1029 966.5 h10 M1021 971 h10 M1034 971 h5 M1021 975 h18"/><path d="M1071.5 962 v-6.5 h6.5 M1090 955.5 h6.5 v6.5 M1096.5 974 v6.5 h-6.5 M1078 980.5 h-6.5 v-6.5"/><circle cx="1084" cy="968" r="6"/><circle cx="1172" cy="964.7" r="10.3"/><path d="M1179.5 972.5 l8 8" stroke-width="2.8"/><path d="M1167 964.7 h10"/><circle cx="1226" cy="964.7" r="10.3"/><path d="M1233.5 972.5 l8 8" stroke-width="2.8"/><path d="M1220.5 962.5 h11 M1220.5 967 h11"/><circle cx="1280" cy="964.7" r="10.3"/><path d="M1287.5 972.5 l8 8" stroke-width="2.8"/><path d="M1274.5 964.7 h11 M1280 959.2 v11"/></g><g fill="none" stroke="rgb(172,172,172)" stroke-width="2" stroke-linejoin="round" stroke-linecap="round"><path d="M2054 11 h11.5 l7 7.5 v17 h-18.5 z M2065.5 11 v7.5 h7"/><circle cx="2122" cy="23" r="12.5"/><path d="M2122 15.5 v8 h-6"/><circle cx="2182" cy="23" r="12.5"/><path d="M2178 19.5 q0-4.5 4-4.5 q4 0 4 4 q0 3-4 4.5 v2.5"/></g><circle cx="2182" cy="30" r="1.4" fill="rgb(172,172,172)"/><g fill="rgb(38,124,246)"><circle cx="2233" cy="14.5" r="5"/><circle cx="2250.5" cy="23" r="5"/><circle cx="2233" cy="31.5" r="5"/></g><path d="M2233 14.5 L2250.5 23 L2233 31.5" fill="none" stroke="rgb(38,124,246)" stroke-width="3"/><rect x="1746" y="305.5" width="811" height="2" fill="rgb(58,55,59)"/><rect x="1746" y="420" width="811" height="2" fill="rgb(58,55,59)"/><rect x="1766.2" y="481.9" width="31.4" height="31.5" fill="rgb(24,22,25)"/><rect x="1768.8" y="484.7" width="26.5" height="26.5" fill="rgb(50,48,52)" stroke="rgb(118,116,118)" stroke-width="1.8"/><path d="M1790.61 496.37 L1790.61 500.03 L1788.33 500.07 L1787.80 501.35 L1789.38 502.99 L1786.79 505.58 L1785.15 504.00 L1783.87 504.53 L1783.83 506.81 L1780.17 506.81 L1780.13 504.53 L1778.85 504.00 L1777.21 505.58 L1774.62 502.99 L1776.20 501.35 L1775.67 500.07 L1773.39 500.03 L1773.39 496.37 L1775.67 496.33 L1776.20 495.05 L1774.62 493.41 L1777.21 490.82 L1778.85 492.40 L1780.13 491.87 L1780.17 489.59 L1783.83 489.59 L1783.87 491.87 L1785.15 492.40 L1786.79 490.82 L1789.38 493.41 L1787.80 495.05 L1788.33 496.33 Z" fill="rgb(160,160,160)"/><circle cx="1782" cy="498.2" r="2.3" fill="rgb(50,48,52)"/><rect x="1766.2" y="521.9" width="31.4" height="31.5" fill="rgb(24,22,25)"/><rect x="1768.8" y="524.7" width="26.5" height="26.5" fill="rgb(50,48,52)" stroke="rgb(118,116,118)" stroke-width="1.8"/><g fill="rgb(160,160,160)"><ellipse cx="1782" cy="535.0" rx="4.4" ry="5.3"/><rect x="1779.6" y="538.2" width="4.8" height="5"/><path d="M1771 549.8 C1771 545.8 1775 544.2 1779.3 542.6 H1784.7 C1789 544.2 1793 545.8 1793 549.8 Z"/></g><rect x="1766.2" y="561.9" width="31.4" height="31.5" fill="rgb(24,22,25)"/><rect x="1768.8" y="564.7" width="26.5" height="26.5" fill="rgb(50,48,52)" stroke="rgb(118,116,118)" stroke-width="1.8"/><g fill="rgb(160,160,160)"><ellipse cx="1782" cy="575.0" rx="4.4" ry="5.3"/><rect x="1779.6" y="578.2" width="4.8" height="5"/><path d="M1771 589.8 C1771 585.8 1775 584.2 1779.3 582.6 H1784.7 C1789 584.2 1793 585.8 1793 589.8 Z"/></g><rect x="1766.2" y="601.9" width="31.4" height="31.5" fill="rgb(24,22,25)"/><rect x="1768.8" y="604.7" width="26.5" height="26.5" fill="rgb(50,48,52)" stroke="rgb(118,116,118)" stroke-width="1.8"/><g fill="rgb(160,160,160)"><ellipse cx="1782" cy="615.0" rx="4.4" ry="5.3"/><rect x="1779.6" y="618.2" width="4.8" height="5"/><path d="M1771 629.8 C1771 625.8 1775 624.2 1779.3 622.6 H1784.7 C1789 624.2 1793 625.8 1793 629.8 Z"/></g><rect x="1766.2" y="641.9" width="31.4" height="31.5" fill="rgb(24,22,25)"/><rect x="1768.8" y="644.7" width="26.5" height="26.5" fill="rgb(50,48,52)" stroke="rgb(118,116,118)" stroke-width="1.8"/><g fill="rgb(160,160,160)"><ellipse cx="1782" cy="655.0" rx="4.4" ry="5.3"/><rect x="1779.6" y="658.2" width="4.8" height="5"/><path d="M1771 669.8 C1771 665.8 1775 664.2 1779.3 662.6 H1784.7 C1789 664.2 1793 665.8 1793 669.8 Z"/></g><rect x="1766.2" y="681.9" width="31.4" height="31.5" fill="rgb(24,22,25)"/><rect x="1768.8" y="684.7" width="26.5" height="26.5" fill="rgb(50,48,52)" stroke="rgb(118,116,118)" stroke-width="1.8"/><g fill="rgb(160,160,160)"><ellipse cx="1782" cy="695.0" rx="4.4" ry="5.3"/><rect x="1779.6" y="698.2" width="4.8" height="5"/><path d="M1771 709.8 C1771 705.8 1775 704.2 1779.3 702.6 H1784.7 C1789 704.2 1793 705.8 1793 709.8 Z"/></g><rect x="1766.2" y="721.9" width="31.4" height="31.5" fill="rgb(24,22,25)"/><rect x="1768.8" y="724.7" width="26.5" height="26.5" fill="rgb(50,48,52)" stroke="rgb(118,116,118)" stroke-width="1.8"/><g fill="rgb(160,160,160)"><ellipse cx="1782" cy="735.0" rx="4.4" ry="5.3"/><rect x="1779.6" y="738.2" width="4.8" height="5"/><path d="M1771 749.8 C1771 745.8 1775 744.2 1779.3 742.6 H1784.7 C1789 744.2 1793 745.8 1793 749.8 Z"/></g><rect x="1766.2" y="761.9" width="31.4" height="31.5" fill="rgb(24,22,25)"/><rect x="1768.8" y="764.7" width="26.5" height="26.5" fill="rgb(50,48,52)" stroke="rgb(118,116,118)" stroke-width="1.8"/><g fill="rgb(160,160,160)"><ellipse cx="1782" cy="775.0" rx="4.4" ry="5.3"/><rect x="1779.6" y="778.2" width="4.8" height="5"/><path d="M1771 789.8 C1771 785.8 1775 784.2 1779.3 782.6 H1784.7 C1789 784.2 1793 785.8 1793 789.8 Z"/></g><rect x="1766.2" y="801.9" width="31.4" height="31.5" fill="rgb(24,22,25)"/><rect x="1768.8" y="804.7" width="26.5" height="26.5" fill="rgb(50,48,52)" stroke="rgb(118,116,118)" stroke-width="1.8"/><g fill="rgb(160,160,160)"><ellipse cx="1782" cy="815.0" rx="4.4" ry="5.3"/><rect x="1779.6" y="818.2" width="4.8" height="5"/><path d="M1771 829.8 C1771 825.8 1775 824.2 1779.3 822.6 H1784.7 C1789 824.2 1793 825.8 1793 829.8 Z"/></g><rect x="1766.2" y="841.9" width="31.4" height="31.5" fill="rgb(24,22,25)"/><rect x="1768.8" y="844.7" width="26.5" height="26.5" fill="rgb(50,48,52)" stroke="rgb(118,116,118)" stroke-width="1.8"/><g fill="rgb(160,160,160)"><ellipse cx="1782" cy="855.0" rx="4.4" ry="5.3"/><rect x="1779.6" y="858.2" width="4.8" height="5"/><path d="M1771 869.8 C1771 865.8 1775 864.2 1779.3 862.6 H1784.7 C1789 864.2 1793 865.8 1793 869.8 Z"/></g><rect x="1766.2" y="881.9" width="31.4" height="31.5" fill="rgb(24,22,25)"/><rect x="1768.8" y="884.7" width="26.5" height="26.5" fill="rgb(50,48,52)" stroke="rgb(118,116,118)" stroke-width="1.8"/><g fill="rgb(160,160,160)"><ellipse cx="1782" cy="895.0" rx="4.4" ry="5.3"/><rect x="1779.6" y="898.2" width="4.8" height="5"/><path d="M1771 909.8 C1771 905.8 1775 904.2 1779.3 902.6 H1784.7 C1789 904.2 1793 905.8 1793 909.8 Z"/></g><rect x="1766.2" y="921.9" width="31.4" height="31.5" fill="rgb(24,22,25)"/><rect x="1768.8" y="924.7" width="26.5" height="26.5" fill="rgb(50,48,52)" stroke="rgb(118,116,118)" stroke-width="1.8"/><g fill="rgb(160,160,160)"><ellipse cx="1782" cy="935.0" rx="4.4" ry="5.3"/><rect x="1779.6" y="938.2" width="4.8" height="5"/><path d="M1771 949.8 C1771 945.8 1775 944.2 1779.3 942.6 H1784.7 C1789 944.2 1793 945.8 1793 949.8 Z"/></g><rect x="1766.2" y="961.9" width="31.4" height="31.5" fill="rgb(24,22,25)"/><rect x="1768.8" y="964.7" width="26.5" height="26.5" fill="rgb(50,48,52)" stroke="rgb(118,116,118)" stroke-width="1.8"/><g fill="rgb(160,160,160)"><ellipse cx="1782" cy="975.0" rx="4.4" ry="5.3"/><rect x="1779.6" y="978.2" width="4.8" height="5"/><path d="M1771 989.8 C1771 985.8 1775 984.2 1779.3 982.6 H1784.7 C1789 984.2 1793 985.8 1793 989.8 Z"/></g></svg>
<div class="t" style="left:87.00px;top:80.25px;font-size:25.8px;color:rgb(255, 255, 255);font-weight:700;transform:scaleX(1.0281);-webkit-text-stroke:0.5px currentColor;">BibleSample</div>
<div class="t" style="left:254.60px;top:80.07px;font-size:26px;color:rgb(205, 205, 205);transform:scaleX(0.9775);-webkit-text-stroke:0.8px currentColor;">PID 21770</div>
<div class="t" style="left:86.50px;top:126.47px;font-size:26px;color:rgb(230, 230, 230);transform:scaleX(0.9527);-webkit-text-stroke:0.8px currentColor;">CPU</div>
<div class="t" style="left:444.00px;top:126.47px;font-size:26px;color:rgb(215, 215, 215);transform:scaleX(0.9608);-webkit-text-stroke:0.8px currentColor;">41%</div>
<div class="t" style="left:86.50px;top:192.97px;font-size:26px;color:rgb(230, 230, 230);transform:scaleX(1.0362);-webkit-text-stroke:0.8px currentColor;">Memory</div>
<div class="t" style="left:382.90px;top:192.97px;font-size:26px;color:rgb(215, 215, 215);-webkit-text-stroke:0.8px currentColor;">193.8 MB</div>
<div class="t" style="left:86.50px;top:258.27px;font-size:26px;color:rgb(230, 230, 230);transform:scaleX(1.0326);-webkit-text-stroke:0.8px currentColor;">Energy Impact</div>
<div class="t" style="left:448.00px;top:258.27px;font-size:26px;color:rgb(215, 215, 215);transform:scaleX(0.9644);-webkit-text-stroke:0.8px currentColor;">Low</div>
<div class="t" style="left:86.50px;top:324.17px;font-size:26px;color:rgb(230, 230, 230);transform:scaleX(1.0088);-webkit-text-stroke:0.8px currentColor;">Disk</div>
<div class="t" style="left:378.00px;top:324.17px;font-size:26px;color:rgb(215, 215, 215);transform:scaleX(1.0035);-webkit-text-stroke:0.8px currentColor;">Zero KB/s</div>
<div class="t" style="left:86.50px;top:390.07px;font-size:26px;color:rgb(230, 230, 230);transform:scaleX(1.0498);-webkit-text-stroke:0.8px currentColor;">Network</div>
<div class="t" style="left:378.00px;top:390.07px;font-size:26px;color:rgb(215, 215, 215);transform:scaleX(1.0035);-webkit-text-stroke:0.8px currentColor;">Zero KB/s</div>
<div class="t" style="left:115.00px;top:454.47px;font-size:26px;color:rgb(250, 250, 250);transform:scaleX(1.0346);-webkit-text-stroke:0.8px currentColor;">UnityFramework</div>
<div class="t" style="left:319.80px;top:454.47px;font-size:26px;color:rgb(178, 178, 178);transform:scaleX(1.0316);-webkit-text-stroke:0.8px currentColor;">(35)</div>
<div class="t" style="left:143.00px;top:497.77px;font-size:26px;color:rgb(250, 250, 250);transform:scaleX(1.0379);-webkit-text-stroke:0.8px currentColor;">DisplayConnection</div>
<div class="t" style="left:378.00px;top:497.77px;font-size:26px;color:rgb(178, 178, 178);transform:scaleX(0.8591);-webkit-text-stroke:0.8px currentColor;">(1)</div>
<div class="t" style="left:143.00px;top:541.77px;font-size:26px;color:rgb(250, 250, 250);transform:scaleX(1.0399);-webkit-text-stroke:0.8px currentColor;">DisplayConnection._sur...</div>
<div class="t" style="left:460.00px;top:541.77px;font-size:26px;color:rgb(178, 178, 178);transform:scaleX(0.8591);-webkit-text-stroke:0.8px currentColor;">(1)</div>
<div class="t" style="left:143.00px;top:585.77px;font-size:26px;color:rgb(250, 250, 250);transform:scaleX(1.0263);-webkit-text-stroke:0.8px currentColor;">DisplayManager</div>
<div class="t" style="left:346.40px;top:585.77px;font-size:26px;color:rgb(178, 178, 178);transform:scaleX(0.8591);-webkit-text-stroke:0.8px currentColor;">(1)</div>
<div class="t" style="left:143.00px;top:629.77px;font-size:26px;color:rgb(250, 250, 250);transform:scaleX(1.0437);-webkit-text-stroke:0.8px currentColor;">Enlighten::LightMethod...</div>
<div class="t" style="left:453.90px;top:629.77px;font-size:26px;color:rgb(178, 178, 178);transform:scaleX(0.8591);-webkit-text-stroke:0.8px currentColor;">(1)</div>
<div class="t" style="left:143.00px;top:673.77px;font-size:26px;color:rgb(250, 250, 250);transform:scaleX(1.0430);-webkit-text-stroke:0.8px currentColor;">Enlighten::LogDispatcher</div>
<div class="t" style="left:455.80px;top:673.77px;font-size:26px;color:rgb(178, 178, 178);transform:scaleX(0.8591);-webkit-text-stroke:0.8px currentColor;">(1)</div>
<div class="t" style="left:143.00px;top:717.77px;font-size:26px;color:rgb(250, 250, 250);transform:scaleX(1.0369);-webkit-text-stroke:0.8px currentColor;">Enlighten::MultithreadC...</div>
<div class="t" style="left:456.00px;top:717.77px;font-size:26px;color:rgb(178, 178, 178);transform:scaleX(0.8591);-webkit-text-stroke:0.8px currentColor;">(1)</div>
<div class="t" style="left:143.00px;top:761.77px;font-size:26px;color:rgb(250, 250, 250);transform:scaleX(1.0216);-webkit-text-stroke:0.8px currentColor;">GfxDeviceWorkerExt</div>
<div class="t" style="left:397.80px;top:761.77px;font-size:26px;color:rgb(178, 178, 178);transform:scaleX(0.8591);-webkit-text-stroke:0.8px currentColor;">(1)</div>
<div class="t" style="left:143.00px;top:805.77px;font-size:26px;color:rgb(250, 250, 250);transform:scaleX(1.0277);-webkit-text-stroke:0.8px currentColor;">GpuProgramMetal</div>
<div class="t" style="left:371.90px;top:805.77px;font-size:26px;color:rgb(178, 178, 178);transform:scaleX(0.8975);-webkit-text-stroke:0.8px currentColor;">(20)</div>
<div class="t" style="left:143.00px;top:849.77px;font-size:26px;color:rgb(250, 250, 250);transform:scaleX(1.0103);-webkit-text-stroke:0.8px currentColor;">HLRTManager</div>
<div class="t" style="left:324.50px;top:849.77px;font-size:26px;color:rgb(178, 178, 178);transform:scaleX(0.8591);-webkit-text-stroke:0.8px currentColor;">(1)</div>
<div class="t" style="left:143.00px;top:893.77px;font-size:26px;color:rgb(250, 250, 250);transform:scaleX(1.0261);-webkit-text-stroke:0.8px currentColor;">KeyboardDelegate</div>
<div class="t" style="left:373.80px;top:893.77px;font-size:26px;color:rgb(178, 178, 178);transform:scaleX(0.8591);-webkit-text-stroke:0.8px currentColor;">(1)</div>
<div class="t" style="left:143.00px;top:937.77px;font-size:26px;color:rgb(250, 250, 250);transform:scaleX(1.0352);-webkit-text-stroke:0.8px currentColor;">OutputCoreAudioObjC</div>
<div class="t" style="left:422.00px;top:937.77px;font-size:26px;color:rgb(178, 178, 178);transform:scaleX(0.8591);-webkit-text-stroke:0.8px currentColor;">(1)</div>
<div class="t" style="left:143.00px;top:981.77px;font-size:26px;color:rgb(250, 250, 250);transform:scaleX(1.0047);-webkit-text-stroke:0.8px currentColor;">OutputCoreAudioObjCD...</div>
<div class="t" style="left:462.40px;top:981.77px;font-size:26px;color:rgb(178, 178, 178);transform:scaleX(0.8591);-webkit-text-stroke:0.8px currentColor;">(1)</div>
<div class="t" style="left:778.40px;top:12.23px;font-size:21.4px;color:rgb(248, 248, 248);transform:scaleX(1.1093);-webkit-text-stroke:0.5px currentColor;">Root-paths: Group - 0</div>
<div class="t" style="left:1100.00px;top:12.50px;font-size:21px;color:rgb(80, 50, 170);transform:scaleX(1.0860);">m</div>
<div class="t" style="left:1132.00px;top:11.88px;font-size:21.4px;color:rgb(214, 214, 214);font-style:italic;transform:scaleX(1.0712);-webkit-text-stroke:0.5px currentColor;">main.mm</div>
<div class="t" style="left:590.50px;top:67.79px;font-size:22px;color:rgb(226, 226, 226);transform:scaleX(1.0379);-webkit-text-stroke:0.5px currentColor;">BibleSample</div>
<div class="t" style="left:784.30px;top:67.79px;font-size:22px;color:rgb(226, 226, 226);transform:scaleX(1.0574);-webkit-text-stroke:0.5px currentColor;">Malloc Blocks</div>
<div class="t" style="left:992.20px;top:67.79px;font-size:22px;color:rgb(226, 226, 226);transform:scaleX(1.0370);-webkit-text-stroke:0.5px currentColor;">Malloc 16.0156 MB</div>
<div class="t" style="left:1254.50px;top:67.79px;font-size:22px;color:rgb(226, 226, 226);transform:scaleX(1.0967);-webkit-text-stroke:0.5px currentColor;">0x148800000</div>
<div class="t" style="left:1428.75px;top:67.79px;font-size:22px;color:rgb(226, 226, 226);transform:scaleX(1.0562);-webkit-text-stroke:0.5px currentColor;">No Selection</div>
<div class="t" style="left:1744.60px;top:61.07px;font-size:26px;color:rgb(160, 160, 160);font-weight:700;transform:scaleX(0.9727);-webkit-text-stroke:0.4px currentColor;">Object</div>
<div class="t" style="left:1776.40px;top:113.38px;font-size:20.8px;color:rgb(222, 222, 222);transform:scaleX(0.9940);-webkit-text-stroke:0.5px currentColor;">Class Name</div>
<div class="t" style="left:1902.00px;top:113.38px;font-size:20.8px;color:rgb(230, 230, 230);transform:scaleX(1.1197);-webkit-text-stroke:0.5px currentColor;">Malloc</div>
<div class="t" style="left:1847.30px;top:148.48px;font-size:20.8px;color:rgb(222, 222, 222);-webkit-text-stroke:0.5px currentColor;">Kind</div>
<div class="t" style="left:1811.90px;top:184.58px;font-size:20.8px;color:rgb(222, 222, 222);transform:scaleX(1.0104);-webkit-text-stroke:0.5px currentColor;">Address</div>
<div class="t" style="left:1902.00px;top:184.58px;font-size:20.8px;color:rgb(230, 230, 230);transform:scaleX(1.1659);-webkit-text-stroke:0.5px currentColor;">0x148800000</div>
<div class="t" style="left:1849.60px;top:220.68px;font-size:20.8px;color:rgb(222, 222, 222);transform:scaleX(0.9737);-webkit-text-stroke:0.5px currentColor;">Size</div>
<div class="t" style="left:1902.00px;top:220.68px;font-size:20.8px;color:rgb(230, 230, 230);transform:scaleX(1.1463);-webkit-text-stroke:0.5px currentColor;">16793600 bytes</div>
<div class="t" style="left:1771.80px;top:256.78px;font-size:20.8px;color:rgb(222, 222, 222);transform:scaleX(1.0345);-webkit-text-stroke:0.5px currentColor;">Malloc Zone</div>
<div class="t" style="left:1902.00px;top:256.78px;font-size:20.8px;color:rgb(230, 230, 230);transform:scaleX(1.1337);-webkit-text-stroke:0.5px currentColor;">MallocStackLoggingLiteZone</div>
<div class="t" style="left:1744.60px;top:319.07px;font-size:26px;color:rgb(160, 160, 160);font-weight:700;transform:scaleX(0.9703);-webkit-text-stroke:0.4px currentColor;">Hierarchy</div>
<div class="t" style="left:1902.40px;top:371.88px;font-size:20.8px;color:rgb(106, 104, 106);transform:scaleX(1.1123);-webkit-text-stroke:0.5px currentColor;">No Hierarchy</div>
<div class="t" style="left:1744.60px;top:432.07px;font-size:26px;color:rgb(160, 160, 160);font-weight:700;transform:scaleX(0.9645);-webkit-text-stroke:0.4px currentColor;">Backtrace</div>
<div class="t" style="left:1808.40px;top:485.79px;font-size:22px;color:rgb(172, 172, 174);transform:scaleX(1.0617);-webkit-text-stroke:0.5px currentColor;">0 _malloc_zone_malloc</div>
<div class="t" style="left:1808.40px;top:525.79px;font-size:22px;color:rgb(172, 172, 174);transform:scaleX(1.0619);-webkit-text-stroke:0.5px currentColor;">1 LowLevelAllocator::Malloc(unsigned long)</div>
<div class="t" style="left:1808.40px;top:565.79px;font-size:22px;color:rgb(172, 172, 174);transform:scaleX(1.0738);-webkit-text-stroke:0.5px currentColor;">2 UnityDefaultAllocator&lt;LowLevelAllocator&gt;::Allocate(unsigned lon...</div>
<div class="t" style="left:1808.40px;top:605.79px;font-size:22px;color:rgb(172, 172, 174);transform:scaleX(1.0665);-webkit-text-stroke:0.5px currentColor;">3 MemoryManager::Allocate(unsigned long, unsigned long, MemLa...</div>
<div class="t" style="left:1808.40px;top:645.79px;font-size:22px;color:rgb(172, 172, 174);transform:scaleX(1.0683);-webkit-text-stroke:0.5px currentColor;">4 QueueAllocator::QueueAllocator(unsigned int, MemLabelId)</div>
<div class="t" style="left:1808.40px;top:685.79px;font-size:22px;color:rgb(172, 172, 174);transform:scaleX(1.0622);-webkit-text-stroke:0.5px currentColor;">5 AsyncUploadManager::ScheduleAsyncRead(AtomicNode*)</div>
<div class="t" style="left:1808.40px;top:725.79px;font-size:22px;color:rgb(172, 172, 174);transform:scaleX(1.0651);-webkit-text-stroke:0.5px currentColor;">6 AsyncUploadManager::ScheduleAsyncCommand(AtomicNode*)</div>
<div class="t" style="left:1808.40px;top:765.79px;font-size:22px;color:rgb(172, 172, 174);transform:scaleX(1.0607);-webkit-text-stroke:0.5px currentColor;">7 AsyncUploadManager::ScheduleAsyncCommandsInternal()</div>
<div class="t" style="left:1808.40px;top:805.79px;font-size:22px;color:rgb(172, 172, 174);transform:scaleX(1.0608);-webkit-text-stroke:0.5px currentColor;">8 AsyncUploadManager::ScheduleAsyncCommands()</div>
<div class="t" style="left:1808.40px;top:845.79px;font-size:22px;color:rgb(172, 172, 174);transform:scaleX(1.0628);-webkit-text-stroke:0.5px currentColor;">9 AsyncUploadManager::AsyncResourceUpload(GfxDevice&amp;, int, As...</div>
<div class="t" style="left:1808.40px;top:885.79px;font-size:22px;color:rgb(172, 172, 174);transform:scaleX(1.0580);-webkit-text-stroke:0.5px currentColor;">10 AsyncUploadManager::AsyncResourceUploadBlocking(GfxDevic...</div>
<div class="t" style="left:1808.40px;top:925.79px;font-size:22px;color:rgb(172, 172, 174);transform:scaleX(1.0486);-webkit-text-stroke:0.5px currentColor;">11 GfxDevice::SyncAsyncResourceUpload(AsyncFence, AsyncUploa...</div>
<div class="t" style="left:1808.40px;top:965.79px;font-size:22px;color:rgb(172, 172, 174);transform:scaleX(1.0528);-webkit-text-stroke:0.5px currentColor;">12 GfxDeviceWorker::RunCommand(ThreadedStreamBuffer&amp;)</div>
<div id="gclip"><div class="t" style="left:60.65px;top:-7.93px;font-size:22.8px;color:rgb(228, 228, 228);transform:scaleX(1.0030);-webkit-text-stroke:0.45px currentColor;">VM: Unity...k __DATA</div><div class="t" style="left:-10.45px;top:166.17px;font-size:22.8px;color:rgb(228, 228, 228);-webkit-text-stroke:0.45px currentColor;">TA</div><div class="t" style="left:107.55px;top:166.17px;font-size:22.8px;color:rgb(228, 228, 228);transform:scaleX(1.0426);-webkit-text-stroke:0.45px currentColor;">malloc&lt;64&gt;</div><div class="t" style="left:363.65px;top:166.17px;font-size:22.8px;color:rgb(228, 228, 228);transform:scaleX(1.0180);-webkit-text-stroke:0.45px currentColor;">malloc&lt;160&gt;</div><div class="t" style="left:622.75px;top:166.17px;font-size:22.8px;color:rgb(228, 228, 228);transform:scaleX(1.0532);-webkit-text-stroke:0.45px currentColor;">malloc&lt;480&gt;</div><div class="t" style="left:1.00px;top:341.07px;font-size:22.8px;color:rgb(228, 228, 228);-webkit-text-stroke:0.45px currentColor;">6</div><div class="t" style="left:66.20px;top:514.87px;font-size:22.8px;color:rgb(228, 228, 228);transform:scaleX(0.9717);-webkit-text-stroke:0.45px currentColor;">VM: VM_ALLOCATE</div><div class="t" style="left:361.90px;top:514.87px;font-size:22.8px;color:rgb(228, 228, 228);transform:scaleX(1.0509);-webkit-text-stroke:0.45px currentColor;">malloc&lt;432&gt;</div><div class="t" style="left:623.35px;top:514.87px;font-size:22.8px;color:rgb(228, 228, 228);transform:scaleX(1.0440);-webkit-text-stroke:0.45px currentColor;">malloc&lt;240&gt;</div><div class="t" style="left:610.15px;top:688.87px;font-size:22.8px;color:rgb(228, 228, 228);transform:scaleX(1.0461);-webkit-text-stroke:0.45px currentColor;">malloc&lt;32768&gt;</div><div class="t" style="left:-10.45px;top:688.87px;font-size:22.8px;color:rgb(228, 228, 228);-webkit-text-stroke:0.45px currentColor;">TA</div><div class="t" style="left:851.60px;top:449.77px;font-size:22.8px;color:rgb(255, 255, 255);transform:scaleX(1.0435);-webkit-text-stroke:0.5px currentColor;">malloc&lt;16793600&gt;</div></div>
</body></html>
